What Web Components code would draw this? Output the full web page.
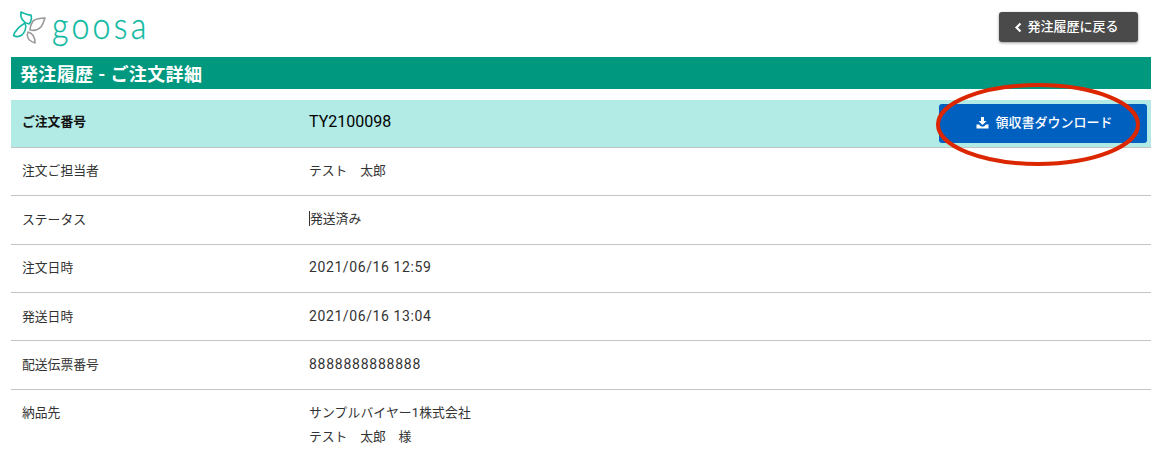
<!DOCTYPE html>
<html lang="ja"><head><meta charset="utf-8">
<style>
html,body{margin:0;padding:0;background:#fff;overflow:hidden}
body{font-family:Roboto,"Noto Sans CJK JP",sans-serif;color:#333;height:472px}
order-page{display:block}
</style></head><body>
<order-page>
  <goosa-logo slot="logo"></goosa-logo>
  <back-button slot="action">発注履歴に戻る</back-button>
  <title-bar slot="title">発注履歴 - ご注文詳細</title-bar>
  <detail-row head label="ご注文番号">TY2100098<download-button slot="action">領収書ダウンロード</download-button></detail-row>
  <detail-row label="注文ご担当者">テスト　太郎</detail-row>
  <detail-row label="ステータス"><span style="border-left:1px solid #333;margin-left:0">発送済み</span></detail-row>
  <detail-row label="注文日時"><span style="letter-spacing:.6px;font-size:14px">2021/06/16 12:59</span></detail-row>
  <detail-row label="発送日時"><span style="letter-spacing:.6px;font-size:14px">2021/06/16 13:04</span></detail-row>
  <detail-row label="配送伝票番号"><span style="letter-spacing:.75px;font-size:14px">8888888888888</span></detail-row>
  <detail-row last label="納品先"><div style="letter-spacing:.15px">サンプルバイヤー1株式会社</div><div>テスト　太郎　様</div></detail-row>
</order-page>
<red-ring></red-ring>
<script>
const def=(n,html,extra)=>customElements.define(n,class extends HTMLElement{
  constructor(){super();this.attachShadow({mode:'open'}).innerHTML=html;}
  connectedCallback(){if(extra)extra(this)}
});
def('order-page',`<style>
:host{display:block;padding:0 10px 0 11px}
header{height:57px;display:flex;justify-content:space-between;align-items:flex-start}
.rows{margin-top:11px;display:flex;flex-direction:column}
</style>
<header><slot name="logo"></slot><slot name="action"></slot></header>
<slot name="title"></slot>
<div class="rows"><slot></slot></div>`);
def('goosa-logo',`<style>
:host{display:flex;align-items:flex-start;height:57px}
svg{display:block;margin-top:11px;margin-left:1px}
span{display:block;font:300 37px/1 Lato,"Open Sans",sans-serif;letter-spacing:3.7px;margin-left:4px;margin-top:6px;color:#0cb8a2;-webkit-text-stroke:.3px #0cb8a2;transform:scaleX(.87);transform-origin:left top}
</style>
<svg width="36" height="34" viewBox="0 0 36 34" fill="none" stroke-width="1.6" stroke-linejoin="round">
<path d="M9 1 C13 3 16 4 19 4 C20 8 19 11 17 13 C12 12 8 8 9 1Z" stroke="#14b8a4"/>
<path d="M1.5 24.500 C3 20 8 15 13 12 C15 16 13 21 10 24 C7 26 4 26 1.500 24.500Z" stroke="#14b8a4"/>
<path d="M33 7 C28 7 24 8 21 10 C19 13 18 16 18 19 C22 20 26 19 29 16 C31 13 32 10 33 7Z" stroke="#999"/>
<path d="M23 32 C20 31 17 29 16 27 C15 25 15 23 16 21 C20 22 23 25 23 32Z" stroke="#999"/>
</svg><span>goosa</span>`);
def('back-button',`<style>
:host{display:inline-flex;align-items:center;justify-content:center;box-sizing:border-box;width:139px;height:30px;margin:12px 13px 0 0;padding:0 4px 3px 0;background:#4a4a4a;color:#fff;border-radius:3px;box-shadow:0 1px 3px rgba(0,0,0,.4);font-size:13px;font-weight:500;gap:5px}
svg{display:block;margin-top:3px}
</style><svg width="8" height="11" viewBox="0 0 8 11" fill="none" stroke="#fff" stroke-width="2.2"><path d="M6.5 1.5 L2.5 5.5 L6.500 9.500"/></svg><slot></slot>`);
def('title-bar',`<style>
:host{display:flex;align-items:center;height:32px;background:#00997f;color:#fff;font-size:18px;font-weight:700;letter-spacing:.35px;padding-left:9px}
</style><slot></slot>`);
def('detail-row',`<style>
:host{display:grid;grid-template-columns:298px 1fr auto;box-sizing:border-box;min-height:48.4px;border-bottom:1px solid #c4c4c4;align-items:center;font-size:13px;color:#333}
:host([head]){background:#b2ebe5;font-weight:700;color:#111;height:47.8px;min-height:47.8px}
:host([head]) .v{font-size:16px;font-weight:400;padding-bottom:3px;color:#000}
:host([head]) .l{padding-bottom:6px}
:host([last]){border-bottom:0;align-items:start;padding-top:11px;line-height:24px}
:host([last]) .l,:host([last]) .v{padding-bottom:0}
.l{padding-left:11px;padding-bottom:3px;font-size:12.8px}
.v{line-height:24px;padding-bottom:1px;font-size:12.8px}
</style><div class="l"></div><div class="v"><slot></slot></div><slot name="action"></slot>`,
el=>{el.shadowRoot.querySelector('.l').textContent=el.getAttribute('label')});
def('download-button',`<style>
:host{display:flex;align-items:center;justify-content:center;gap:7px;box-sizing:border-box;width:208px;height:39px;margin-right:4px;padding:0 0 4px 2px;background:#0060c0;color:#fff;border-radius:3px;font-size:13px;font-weight:500;letter-spacing:0}
svg{display:block;margin-top:3px;margin-left:1px;margin-right:-1px}
</style><svg width="13" height="12" viewBox="0 0 13 12" fill="#fff"><path d="M5 0h3v4h2.5L6.5 8 2.5 4H5z"/><path d="M.5 7.5h2.5L5 9.5h3l2-2h2.5V11.5H.5z"/></svg><slot></slot>`);
def('red-ring',`<style>:host{position:absolute;left:934px;top:82px;display:block}svg{display:block}</style>
<svg width="210" height="88" viewBox="0 0 210 88" fill="none"><ellipse cx="104" cy="42.500" rx="100" ry="39.500" stroke="#dc2600" stroke-width="4"/></svg>`);
</script>
</body></html>
